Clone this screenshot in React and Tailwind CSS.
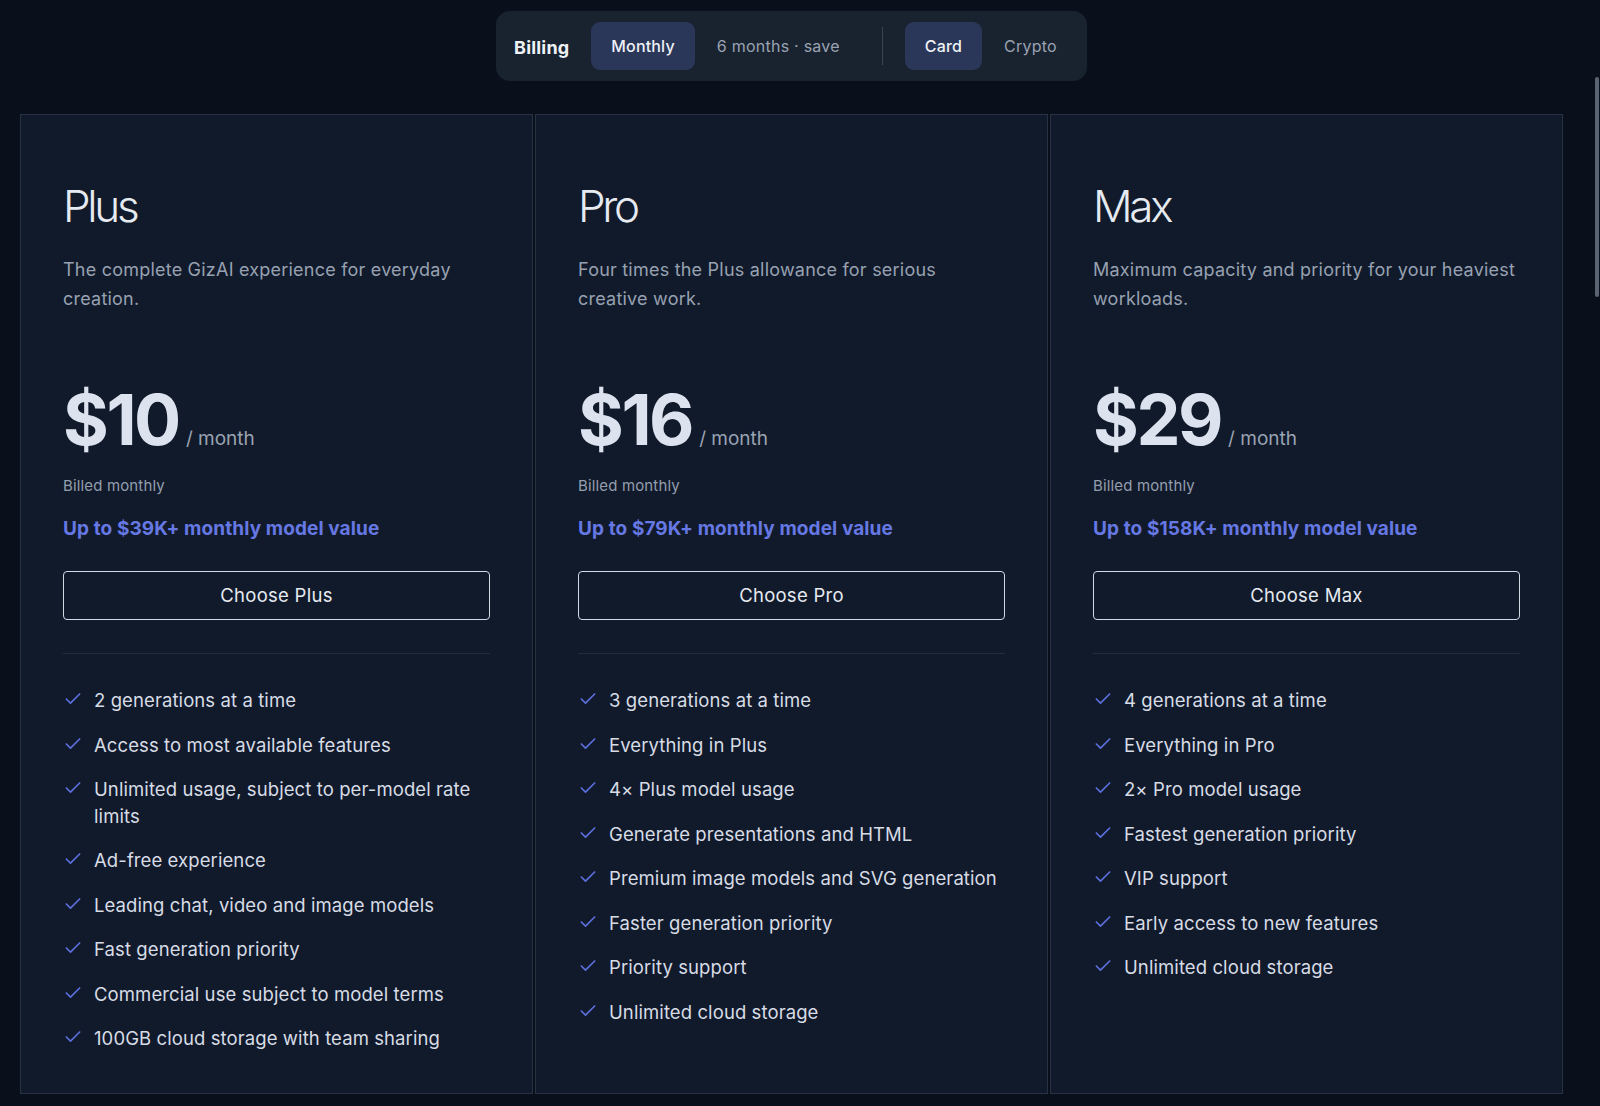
import React from "react";

const plans = [
  {
    name: "Plus",
    description: "The complete GizAI experience for everyday creation.",
    price: "$10",
    value: "Up to $39K+ monthly model value",
    features: [
      "2 generations at a time",
      "Access to most available features",
      "Unlimited usage, subject to per-model rate limits",
      "Ad-free experience",
      "Leading chat, video and image models",
      "Fast generation priority",
      "Commercial use subject to model terms",
      "100GB cloud storage with team sharing",
    ],
  },
  {
    name: "Pro",
    description: "Four times the Plus allowance for serious creative work.",
    price: "$16",
    value: "Up to $79K+ monthly model value",
    features: [
      "3 generations at a time",
      "Everything in Plus",
      "4× Plus model usage",
      "Generate presentations and HTML",
      "Premium image models and SVG generation",
      "Faster generation priority",
      "Priority support",
      "Unlimited cloud storage",
    ],
  },
  {
    name: "Max",
    description: "Maximum capacity and priority for your heaviest workloads.",
    price: "$29",
    value: "Up to $158K+ monthly model value",
    features: [
      "4 generations at a time",
      "Everything in Pro",
      "2× Pro model usage",
      "Fastest generation priority",
      "VIP support",
      "Early access to new features",
      "Unlimited cloud storage",
    ],
  },
];

function CheckIcon() {
  return (
    <svg
      width="20"
      height="20"
      viewBox="0 0 24 24"
      fill="none"
      stroke="#5b6fdc"
      strokeWidth="2"
      strokeLinecap="round"
      strokeLinejoin="round"
      className="shrink-0 mt-[2px]"
    >
      <path d="M20 6 9 17l-5-5" />
    </svg>
  );
}

function BillingBar() {
  return (
    <div className="flex justify-center">
      <div className="flex items-center rounded-[14px] bg-[#19222f] pl-[18px] pr-[10px] py-[11px]">
        <span className="mr-[22px] mt-[2px] text-[18px] font-bold tracking-[0.01em] text-[#eef1f6]">Billing</span>
        <div className="flex items-center gap-[2px]">
          <button className="h-[48px] rounded-[9px] bg-[#2b3759] px-5 text-[16px] font-medium tracking-[0.01em] text-[#eef1f6]">
            Monthly
          </button>
          <button className="h-[48px] rounded-[9px] px-5 text-[16px] tracking-[0.015em] text-[#9aa3b2]">
            6 months · save
          </button>
        </div>
        <div className="mx-[22px] h-[38px] w-px bg-[#3a4454]" />
        <div className="flex items-center gap-[2px]">
          <button className="h-[48px] rounded-[9px] bg-[#2b3759] px-5 text-[16px] font-medium tracking-[0.01em] text-[#eef1f6]">
            Card
          </button>
          <button className="h-[48px] rounded-[9px] px-5 text-[16px] tracking-[0.015em] text-[#9aa3b2]">
            Crypto
          </button>
        </div>
      </div>
    </div>
  );
}

function PlanCard({ plan }) {
  return (
    <div className="flex flex-col border border-[#263142] bg-[#111a2b] px-[42px] pt-[69px] pb-[41px]">
      <h2 className="text-[44px] font-light leading-none tracking-[-0.075em] text-[#e6eaf1]">
        {plan.name}
      </h2>
      <p className="mt-[28px] max-w-[426px] text-[18px] leading-[28.5px] tracking-[0.012em] text-[#97a1b1]">
        {plan.description}
      </p>

      <div className="mt-[72px] flex items-baseline">
        <span className="text-[70px] font-bold leading-none tracking-[-0.035em] text-[#dde3ee]">
          {plan.price}
        </span>
        <span className="ml-[7px] text-[19px] text-[#9aa3b2]">/ month</span>
      </div>
      <div className="mt-[21px] text-[15px] leading-5 tracking-[0.01em] text-[#949eae]">Billed monthly</div>
      <div className="mt-[19px] text-[19px] font-bold leading-7 tracking-[0.005em] text-[#6678e3]">{plan.value}</div>

      <button className="mt-[28px] h-[49px] w-full rounded-[4px] border-[1.5px] border-[#d3d9e3] text-[18.5px] tracking-[0.015em] text-[#e6eaf1]">
        Choose {plan.name}
      </button>

      <div className="mt-[33px] h-px bg-[#222c3c]" />

      <ul className="mt-[33px] flex flex-col gap-[18px]">
        {plan.features.map((f) => (
          <li key={f} className="flex items-start gap-[11px]">
            <CheckIcon />
            <span className="text-[18.5px] leading-[26.5px] tracking-[0.005em] text-[#d7dce5]">{f}</span>
          </li>
        ))}
      </ul>
    </div>
  );
}

export default function App() {
  return (
    <div className="flex min-h-screen bg-[#09101c] font-['Inter','Noto_Sans',sans-serif]">
      <main className="min-w-0 flex-1 pl-5 pr-[22px] pt-[11px]">
        <BillingBar />
        <div className="mt-[33px] grid grid-cols-3 gap-[2px]">
          {plans.map((p) => (
            <PlanCard key={p.name} plan={p} />
          ))}
        </div>
      </main>
      <div className="flex w-[15px] justify-end pr-px pt-[77px]">
        <div className="h-[220px] w-[4px] rounded-full bg-[#5a6372]" />
      </div>
    </div>
  );
}
